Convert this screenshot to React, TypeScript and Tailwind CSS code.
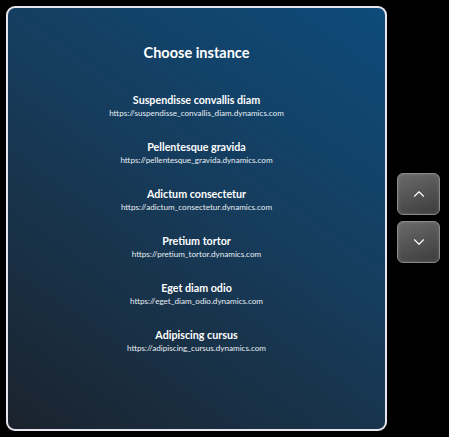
import { ChevronUp, ChevronDown } from "lucide-react";

const instances = [
  { name: "Suspendisse convallis diam", url: "https://suspendisse_convallis_diam.dynamics.com" },
  { name: "Pellentesque gravida", url: "https://pellentesque_gravida.dynamics.com" },
  { name: "Adictum consectetur", url: "https://adictum_consectetur.dynamics.com" },
  { name: "Pretium tortor", url: "https://pretium_tortor.dynamics.com" },
  { name: "Eget diam odio", url: "https://eget_diam_odio.dynamics.com" },
  { name: "Adipiscing cursus", url: "https://adipiscing_cursus.dynamics.com" },
];

const NavButton = ({ up }: { up?: boolean }) => (
  <button
    className="w-[43px] h-[42px] rounded-[6px] border border-[#8a8a8a]
    bg-[linear-gradient(160deg,#6a6a6a,#3c3c3c)] flex items-center justify-center
    shadow-[inset_0_0_4px_rgba(255,255,255,0.15)]"
  >
    {up ? (
      <ChevronUp size={18} strokeWidth={1.5} className="text-white" />
    ) : (
      <ChevronDown size={18} strokeWidth={1.5} className="text-white" />
    )}
  </button>
);

export default function App() {
  return (
    <div className="w-[449px] h-[437px] bg-black flex font-['Lato',sans-serif]">
      <div
        className="ml-[6px] mt-[6px] w-[381px] h-[425px] rounded-[9px] border-2 border-[#e8e4ee]
        bg-[linear-gradient(215deg,#0d4b7a_0%,#163c5c_45%,#1b232d_100%)]
        flex flex-col items-center text-white"
      >
        <h1 className="mt-[34px] text-[14.5px] font-bold leading-[22px]">Choose instance</h1>
        <div className="mt-[28px] flex flex-col items-center gap-[20px]">
          {instances.map((i) => (
            <div key={i.name} className="flex flex-col items-center">
              <div className="text-[10.7px] font-bold leading-[15px]">{i.name}</div>
              <div className="mt-[0px] text-[8.1px] leading-[12px] text-[#e6edf3]">{i.url}</div>
            </div>
          ))}
        </div>
      </div>
      <div className="ml-[10px] mt-[173px] flex flex-col gap-[6px]">
        <NavButton up />
        <NavButton />
      </div>
    </div>
  );
}
